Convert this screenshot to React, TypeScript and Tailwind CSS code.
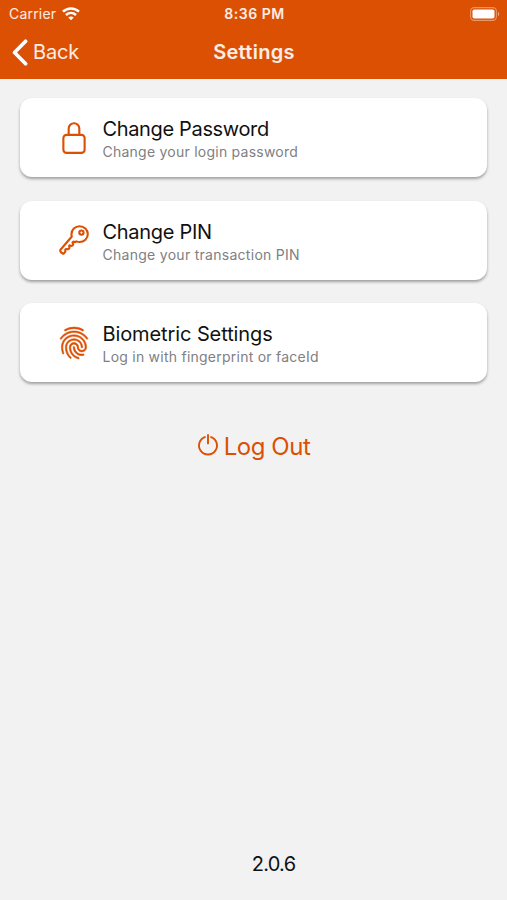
import type { IconType } from "react-icons";
import { IoFingerPrintOutline, IoKeyOutline, IoLockClosedOutline } from "react-icons/io5";

interface SettingItem {
  title: string;
  subtitle: string;
  icon: IconType;
  iconClass: string;
  titleClass: string;
  subtitleClass: string;
}

const items: SettingItem[] = [
  {
    title: "Change Password",
    subtitle: "Change your login password",
    icon: IoLockClosedOutline,
    iconClass: "",
    titleClass: "tracking-[-0.35px]",
    subtitleClass: "tracking-[0.24px]",
  },
  {
    title: "Change PIN",
    subtitle: "Change your transaction PIN",
    icon: IoKeyOutline,
    iconClass: "",
    titleClass: "tracking-[-0.3px]",
    subtitleClass: "tracking-[0.28px]",
  },
  {
    title: "Biometric Settings",
    subtitle: "Log in with fingerprint or faceId",
    icon: IoFingerPrintOutline,
    iconClass: "stroke-[8px]",
    titleClass: "tracking-[-0.1px]",
    subtitleClass: "tracking-[0.24px]",
  },
];

function WifiIcon() {
  return (
    <svg width="18" height="14" viewBox="0 0 18 14" fill="none" stroke="white" strokeWidth="2.5">
      <path d="M1 4.7C5.6 0.4 12.4 0.4 17 4.7" />
      <path d="M4 8C7 5.3 11 5.3 14 8" />
      <path d="M9 13.2L6.3 10.5C7.8 9.1 10.2 9.1 11.7 10.5Z" fill="white" stroke="none" />
    </svg>
  );
}

function BatteryIcon() {
  return (
    <svg width="30" height="14" viewBox="0 0 30 14">
      <rect x="0.6" y="0.6" width="25.8" height="12.8" rx="3.6" fill="none" stroke="white" strokeOpacity="0.4" strokeWidth="1.1" />
      <rect x="2.5" y="2.4" width="22" height="9.2" rx="1.8" fill="white" />
      <path d="M28 4.8C29.6 5.6 29.6 8.4 28 9.2Z" fill="white" fillOpacity="0.5" />
    </svg>
  );
}

function PowerIcon() {
  return (
    <svg width="22" height="24" viewBox="0 0 22 24" fill="none" stroke="currentColor" strokeWidth="1.9" strokeLinecap="round">
      <path d="M7.9 4.1A9 9 0 1 0 14.1 4.1" />
      <path d="M11 1.9V10.4" />
    </svg>
  );
}

function Header() {
  return (
    <header className="h-[79px] bg-[#dc5003] text-white">
      {/* Status bar */}
      <div className="grid h-[27px] grid-cols-3 items-center pl-[9px] pr-[7px]">
        <div className="flex items-center gap-[6px] text-[14px] tracking-[0.2px] text-white/90">
          Carrier
          <WifiIcon />
        </div>
        <span className="text-center text-[14px] font-semibold tracking-[0.5px] text-white/90">8:36 PM</span>
        <div className="flex justify-end">
          <BatteryIcon />
        </div>
      </div>

      {/* Navigation bar */}
      <div className="grid h-[51px] grid-cols-3 items-center pl-[12px] pr-[11px]">
        <button className="flex items-center gap-[5px] text-[20px] tracking-[-0.2px] text-white/90">
          <svg width="16" height="27" viewBox="0 0 16 27" fill="none" stroke="white" strokeWidth="3.6" strokeLinecap="round" strokeLinejoin="round">
            <path d="M13.6 2.2L2.5 13.5L13.6 24.8" />
          </svg>
          <span className="-mt-px">Back</span>
        </button>
        <h1 className="-mt-px text-center text-[20px] font-semibold tracking-[0.3px] text-white/90">Settings</h1>
      </div>
    </header>
  );
}

function SettingCard({ item }: { item: SettingItem }) {
  const Icon = item.icon;
  return (
    <button className="flex h-[79px] items-center rounded-[12px] bg-white pl-[37px] text-left shadow-[0_2px_3px_rgba(0,0,0,0.34)]">
      <Icon className={`size-[34px] text-[#dc5003] ${item.iconClass}`} />
      <span className="flex flex-col pl-[11.5px] pt-[4px]">
        <span className={`text-[20px] leading-[25px] text-[#111] ${item.titleClass}`}>{item.title}</span>
        <span className={`text-[14px] leading-[20px] text-[#808083] ${item.subtitleClass}`}>{item.subtitle}</span>
      </span>
    </button>
  );
}

export default function App() {
  return (
    <div className="flex h-[900px] w-[507px] flex-col overflow-hidden bg-[#f2f2f2] font-['Inter','Liberation_Sans',sans-serif]">
      <Header />
      <main className="flex flex-1 flex-col px-[20px] pt-[19px]">
        <div className="flex flex-col gap-[23.7px]">
          {items.map((item) => (
            <SettingCard key={item.title} item={item} />
          ))}
        </div>
        <button className="mt-[47px] flex items-center justify-center gap-[5px] text-[24px] tracking-[-0.45px] text-[#dc5003]">
          <span className="-mt-[4px]">
            <PowerIcon />
          </span>
          Log Out
        </button>
        <p className="mt-auto pb-[21px] pl-[40px] text-center text-[20px] tracking-[-0.7px] text-[#111]">2.0.6</p>
      </main>
    </div>
  );
}
